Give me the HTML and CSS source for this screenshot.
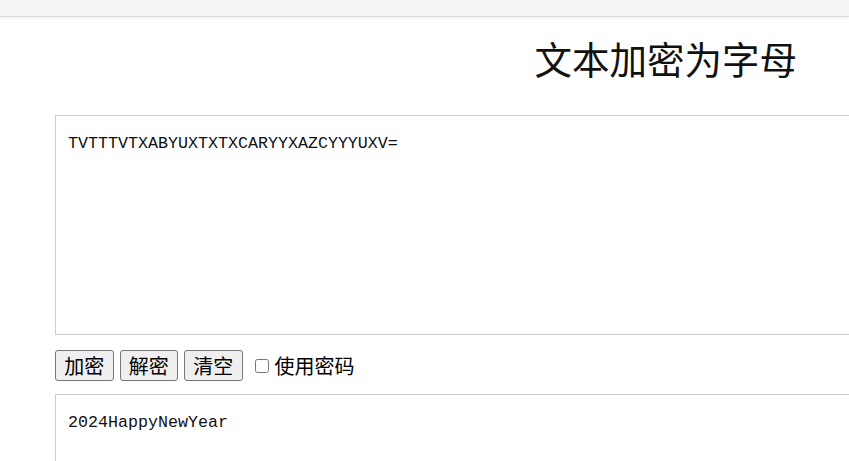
FILE: index.html
```html
<!DOCTYPE html>
<html lang="zh">
<head>
<meta charset="utf-8">
<title>文本加密为字母</title>
<link rel="stylesheet" href="styles.css">
</head>
<body>
<div class="topbar"></div>
<header class="header">
  <h1 class="title">文本加密为字母</h1>
</header>
<main class="main">
  <textarea class="box box-top">TVTTTVTXABYUXTXTXCARYYXAZCYYYUXV=</textarea>
  <div class="controls">
    <button class="btn">加密</button>
    <button class="btn">解密</button>
    <button class="btn">清空</button>
    <label class="check"><input type="checkbox" class="check-input"><span>使用密码</span></label>
  </div>
  <textarea class="box box-bottom">2024HappyNewYear</textarea>
</main>
</body>
</html>
```

FILE: styles.css
```css
html, body {
  margin: 0;
  padding: 0;
  background: #fff;
  overflow: hidden;
}
body {
  font-family: "Noto Sans CJK SC", "Liberation Sans", sans-serif;
  color: #000;
}
.topbar {
  height: 16px;
  background: #f4f4f4;
  border-bottom: 1px solid #dcdcdc;
  box-shadow: 0 1px 3px rgba(0,0,0,0.08);
}
.header {
  display: flex;
  justify-content: flex-end;
  padding-right: 52px;
}
.title {
  margin: 0;
  padding-top: 13px;
  font-size: 37.5px;
  font-weight: 400;
  line-height: 56px;
  color: #111;
}
.main {
  padding-left: 55px;
  padding-top: 29px;
  display: flex;
  flex-direction: column;
}
.box {
  display: block;
  box-sizing: border-box;
  width: 900px;
  border: 1px solid #cccccc;
  padding: 16px 12px;
  margin: 0;
  font-family: "Liberation Mono", monospace;
  font-size: 16.67px;
  line-height: 24px;
  color: #111;
  resize: none;
  outline: none;
  background: #fff;
}
.box-top {
  height: 220px;
}
.box-bottom {
  height: 120px;
}
.controls {
  display: flex;
  align-items: center;
  gap: 6px;
  margin: 15px 0 13px;
  height: 31px;
}
.btn {
  box-sizing: border-box;
  width: 58.5px;
  height: 31px;
  padding: 0;
  font-family: "Noto Sans CJK SC", sans-serif;
  font-size: 20px;
  line-height: 1;
  color: #000;
  background: #efefef;
  border: 1px solid #767676;
  border-radius: 3px;
}
.check {
  display: flex;
  align-items: center;
  margin-left: 6px;
  font-size: 20px;
  line-height: 1;
}
.check-input {
  width: 14px;
  height: 14px;
  margin: 0 6px 0 0;
}
```
